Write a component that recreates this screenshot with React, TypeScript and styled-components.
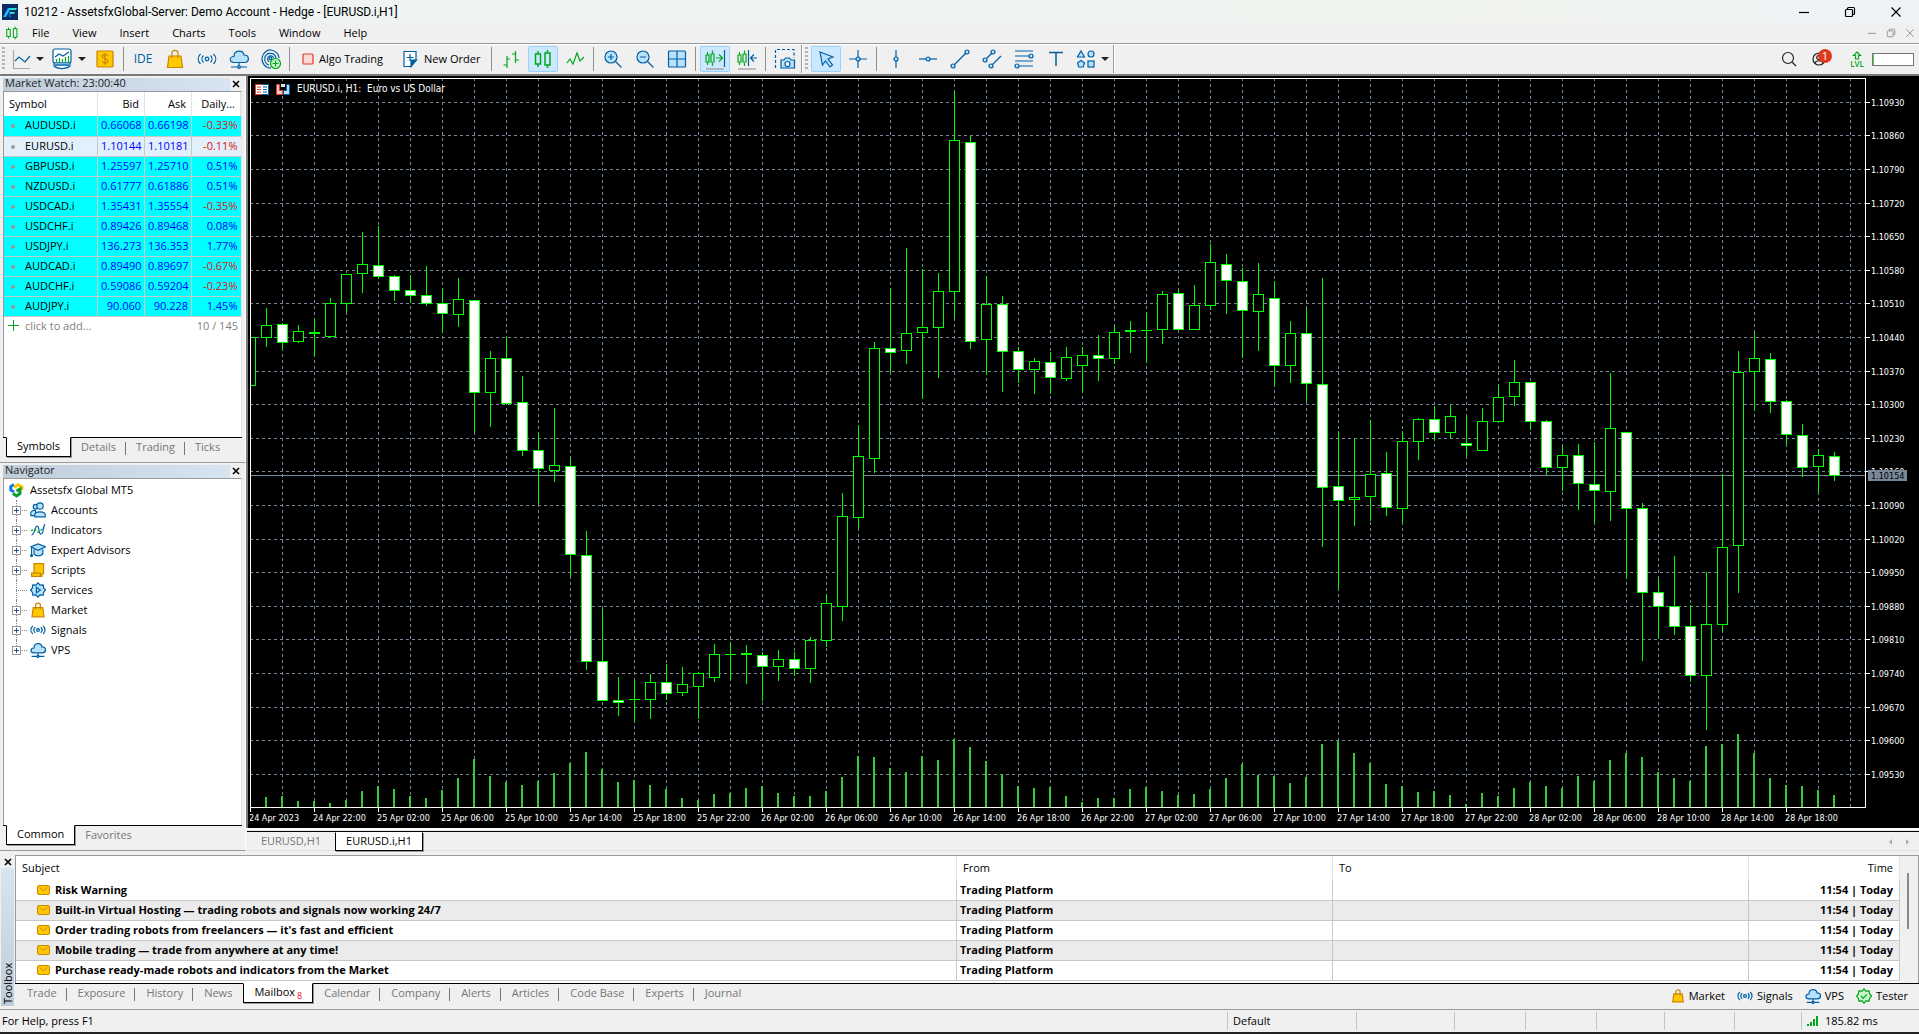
import React from "react";
import styled, { createGlobalStyle, css } from "styled-components";

const UI_FONT = `"Open Sans", "Noto Sans", "Liberation Sans", sans-serif`;
const TITLE_FONT = `Roboto, "Open Sans", "Liberation Sans", sans-serif`;
const AXIS_FONT = `"DejaVu Sans Condensed", "Open Sans", "Noto Sans", sans-serif`;
const BLUE = "#005fa3";
const SKY = "#b9e1fc";
const GREEN = "#00a81c";
const GOLD = "#ffc800";
const GOLD_DARK = "#c98600";

const GlobalStyle = createGlobalStyle`
  *, *::before, *::after { box-sizing: border-box; }
  html, body, #root { height: 100%; }
  body {
    margin: 0;
    background: #f0f0f0;
    color: #000;
    font-family: ${UI_FONT};
    font-size: 11px;
    line-height: 16px;
    overflow: hidden;
  }
  button {
    margin: 0;
    padding: 0;
    border: 0;
    background: none;
    color: inherit;
    font: inherit;
    white-space: nowrap;
  }
  svg { display: block; flex: none; }
`;

/* ---------- icons ---------- */

type IconProps = { size?: number; children: React.ReactNode; box?: number };
const Icon = ({ size = 20, box = 20, children }: IconProps) => (
  <svg
    width={size}
    height={size}
    viewBox={`0 0 ${box} ${box}`}
    fill="none"
    stroke={BLUE}
    strokeWidth={(1.2 * box) / size}
    aria-hidden="true"
  >
    {children}
  </svg>
);

const AppLogo = () => (
  <svg width="16" height="16" viewBox="0 0 16 16" aria-hidden="true">
    <rect width="16" height="16" fill="#0b2d63" />
    <path d="M1 13 6 4h3L4 13z" fill="#1fb6ff" />
    <path d="M8 4h7l-1 2H8zM8 8h5l-1 2H8z" fill="#2de0c8" />
    <path d="M7 6l2 7H7z" fill="#1273d8" />
  </svg>
);
const CandlesIcon = ({ size = 20 }: { size?: number }) => (
  <svg width={size} height={size} viewBox="0 0 20 20" fill="none" stroke={GREEN} strokeWidth="1.5" aria-hidden="true">
    <path d="M5 2v3M5 15v3M14.500 1v3M14.500 16v3M2.500 5h5v10h-5zM12 4h5v12h-5z" />
  </svg>
);
const LineChartIcon = () => (
  <Icon>
    <path d="M2.500 1v18.500H19" stroke="#a8a8a8" />
    <path d="M4 12l4-4 6 5 5-6" />
  </Icon>
);
const ChartGlobeIcon = () => (
  <Icon size={22} box={22}>
    <rect x="2" y="1" width="18" height="14" rx="2" fill="#fff" />
    <path d="M3 18c4 3.500 12 3.500 16 0v-3H3z" fill="#fff" />
    <path d="M4 17h14" stroke="#3c87c6" strokeWidth="2" />
    <path d="M4 9l4-3 4 2 6-4" />
    <path d="M5.500 14v-3M8.500 14v-4M11.500 14v-3M14.500 14v-5M17.500 14V8" stroke={GREEN} />
  </Icon>
);
const DollarIcon = () => (
  <Icon>
    <rect x="2" y="2" width="16" height="16" rx="1" fill={GOLD} stroke={GOLD_DARK} />
    <path d="M10 4v12M13 7c-1-2-6-2-6 .5s6 2 6 4.500-5 2.500-6 .5" stroke={GOLD_DARK} />
  </Icon>
);
const BagIcon = ({ size = 20 }: { size?: number }) => (
  <Icon size={size}>
    <path d="M4 7h12l1.500 11.500h-15z" fill={GOLD} stroke={GOLD_DARK} />
    <path d="M7 9V4c0-3.500 6-3.500 6 0v5" stroke={GOLD_DARK} />
  </Icon>
);
const SignalIcon = ({ size = 20 }: { size?: number }) => (
  <Icon size={size}>
    <circle cx="10" cy="10" r="1.800" fill={SKY} />
    <path d="M6.500 6.500c-2 2-2 5 0 7M13.500 6.500c2 2 2 5 0 7M3.500 5c-3 3-3 7 0 10M16.500 5c3 3 3 7 0 10" />
  </Icon>
);
const CloudIcon = ({ size = 20 }: { size?: number }) => (
  <Icon size={size}>
    <path d="M5 13.500c-5 0-5-6 0-6 0-7 9-7 10-1.500 6 0 5.500 7.500.5 7.500z" fill={SKY} />
    <path d="M10 14v3M2 18h16" />
    <circle cx="10" cy="18" r="1.300" fill={SKY} />
  </Icon>
);
const TargetIcon = () => (
  <Icon size={22} box={22}>
    <path d="M11 20C5 20 1.500 15 2 10S7 1.500 11 2s8 4 8 8M9 17c-3-1-5-4-4-8s9-6 11 1M9 14c-4-4 1-9 5-4" />
    <circle cx="10.500" cy="10.500" r="1.300" fill={SKY} />
    <circle cx="15.500" cy="15.500" r="5" fill="#c8f4c8" stroke={GREEN} />
    <path d="M15.500 12.500v6M12.500 15.500h6" stroke={GREEN} />
  </Icon>
);
const AlgoIcon = () => (
  <Icon size={12} box={12}>
    <rect x="1" y="1" width="10" height="10" rx="1" fill="#ffd9d3" stroke="#e03c31" />
  </Icon>
);
const NewOrderIcon = () => (
  <Icon size={18} box={18}>
    <path d="M3 1.500h12v8l-5 7H3z" fill="#fff" />
    <path d="M15.500 10H10v6.500z" fill={BLUE} />
    <path d="M9 4v7M5.500 7.500h7" />
  </Icon>
);
const BarsIcon = () => (
  <Icon>
    <path d="M6 7v12M2.500 16H6M6 10h3M14.500 2v12M11 5h3.500M14.500 11H18" stroke={GREEN} />
  </Icon>
);
const ZigzagIcon = () => (
  <Icon>
    <path d="M2 14l3-4 3 5 4-11 3 8 4-4" stroke={GREEN} />
  </Icon>
);
const ZoomIcon = ({ plus }: { plus?: boolean }) => (
  <Icon>
    <circle cx="8" cy="8" r="6" fill={SKY} />
    <path d="M12.500 12.500l6 6M5 8h6" />
    {plus && <path d="M8 5v6" />}
  </Icon>
);
const TileIcon = () => (
  <Icon>
    <rect x="1.500" y="2" width="17" height="16" rx="1" fill={SKY} />
    <path d="M10 2v16M2 10h16" />
  </Icon>
);
const ShiftIcon = ({ left }: { left?: boolean }) => (
  <Icon size={22} box={22}>
    <path d="M3.500 4v3M3.500 14v3M8.500 2.500v3M8.500 15v3M2 7h3v7H2zM7 6h3v8H7z" stroke={GREEN} />
    {left ? (
      <path d="M12.500 2v16M21 10h-6M18 6.500L14.500 10l3.500 3.500" />
    ) : (
      <>
        <path d="M20.500 2v17" />
        <path d="M12 10h6M15 6.500l3.500 3.500-3.500 3.500" stroke={GREEN} />
      </>
    )}
    <path d="M2 21h18" stroke="#999" />
  </Icon>
);
const CameraIcon = () => (
  <Icon size={22} box={22}>
    <path d="M1.500 20V1.500H20V10" strokeDasharray="3 2" />
    <path d="M7 12h3l1.500-2h4L17 12h3.500v8H7z" fill={SKY} />
    <circle cx="13.500" cy="16" r="2.500" fill="#fff" />
  </Icon>
);
const CursorIcon = () => (
  <Icon>
    <path d="M4 3l13 5-5 2 4.500 6-2.500 2-4.500-6L6.500 16z" fill={SKY} />
  </Icon>
);
const CrossIcon = () => (
  <Icon>
    <path d="M10 1v18M1 10h18" />
    <circle cx="10" cy="10" r="2" fill={SKY} />
  </Icon>
);
const VLineIcon = () => (
  <Icon>
    <path d="M10 1v18" />
    <circle cx="10" cy="10" r="2" fill={SKY} />
  </Icon>
);
const HLineIcon = () => (
  <Icon>
    <path d="M1 10h18" />
    <circle cx="10" cy="10" r="2" fill={SKY} />
  </Icon>
);
const TrendIcon = () => (
  <Icon>
    <path d="M3 17L17 3" />
    <circle cx="3" cy="17" r="2" fill={SKY} />
    <circle cx="17" cy="3" r="2" fill={SKY} />
  </Icon>
);
const ChannelIcon = () => (
  <Icon>
    <path d="M3 11l8-8M9 17L19 7" />
    <circle cx="3" cy="11" r="2" fill={SKY} />
    <circle cx="11" cy="3" r="2" fill={SKY} />
    <circle cx="9" cy="17" r="2" fill={SKY} />
  </Icon>
);
const FiboIcon = () => (
  <Icon>
    <path d="M1 2h18M1 7h15M1 12h18M3 17h16" />
    <circle cx="17" cy="7" r="2" fill={SKY} />
    <circle cx="3" cy="17" r="2" fill={SKY} />
  </Icon>
);
const TextIcon = () => (
  <Icon>
    <path d="M3 3.500h14M10 3.500V17" strokeWidth="1.500" />
  </Icon>
);
const ShapesIcon = () => (
  <Icon>
    <path d="M5 2l3.500 6h-7zM5 11.500l3.500 2.500-1.300 4H2.800L1.500 14z" fill={SKY} />
    <circle cx="15" cy="5" r="3" fill={SKY} />
    <rect x="12" y="12" width="6" height="6" fill={SKY} />
  </Icon>
);
const CaretIcon = () => (
  <svg width="8" height="4" viewBox="0 0 8 4" aria-hidden="true">
    <path d="M0 0h8L4 4z" fill="#222" />
  </svg>
);
const SearchIcon = () => (
  <svg width="16" height="16" viewBox="0 0 16 16" fill="none" stroke="#222" strokeWidth="1.200" aria-hidden="true">
    <circle cx="7" cy="7" r="5.500" />
    <path d="M11 11l4 4" />
  </svg>
);
const UserIcon = () => (
  <svg width="14" height="14" viewBox="0 0 14 14" fill="none" stroke="#222" strokeWidth="1.200" aria-hidden="true">
    <circle cx="7" cy="7" r="6" />
    <circle cx="7" cy="5.500" r="2.300" />
    <path d="M3 11c1-3 7-3 8 0" />
  </svg>
);
const UpArrowIcon = () => (
  <svg width="10" height="9" viewBox="0 0 10 9" fill="none" stroke={GREEN} strokeWidth="1.200" aria-hidden="true">
    <path d="M5 1l3.500 3.500H6.500V8h-3V4.500h-2z" />
  </svg>
);
const MinimizeIcon = ({ size = 12 }: { size?: number }) => (
  <svg width={size} height={size} viewBox="0 0 12 12" stroke="currentColor" strokeWidth="1.200" aria-hidden="true">
    <path d="M1 6.500h10" />
  </svg>
);
const RestoreIcon = ({ size = 12 }: { size?: number }) => (
  <svg width={size} height={size} viewBox="0 0 12 12" fill="none" stroke="currentColor" strokeWidth="1.200" aria-hidden="true">
    <rect x="1.500" y="3.500" width="7" height="7" rx="1" />
    <path d="M3.500 3.500V2.500c0-.6.400-1 1-1h5c.6 0 1 .4 1 1v5c0 .6-.4 1-1 1h-1" />
  </svg>
);
const CloseIcon = ({ size = 12, weight = 1.2 }: { size?: number; weight?: number }) => (
  <svg width={size} height={size} viewBox="0 0 12 12" stroke="currentColor" strokeWidth={weight} aria-hidden="true">
    <path d="M1.500 1.500l9 9M10.500 1.500l-9 9" />
  </svg>
);
const PlusIcon = () => (
  <svg width="11" height="11" viewBox="0 0 11 11" stroke={GREEN} aria-hidden="true">
    <path d="M5.500 0v11M0 5.500h11" />
  </svg>
);
const PlatformIcon = () => (
  <svg width="15" height="15" viewBox="0 0 15 15" fill="none" strokeWidth="3" aria-hidden="true">
    <path d="M5 1.500L1.800 3.500V7L5 9" stroke="#0a7de0" />
    <path d="M5 4.500L9 1.800l4 2.200v3" stroke="#ffc400" />
    <path d="M4 10.500l3.500 2.500 3.500-2.500V6L7.500 8" stroke="#0a9e2a" />
  </svg>
);
const AccountsIcon = () => (
  <Icon size={16}>
    <circle cx="7" cy="6" r="3" fill={SKY} />
    <path d="M1 17v-3c0-3 4-4 6-3v6z" fill={SKY} />
    <circle cx="12.500" cy="5" r="4" fill={SKY} />
    <path d="M6 18.500V16c0-5 13-5 13 0v2.500z" fill={SKY} />
  </Icon>
);
const IndicatorsIcon = () => (
  <Icon size={16}>
    <path d="M2 16c4 0 4-11 7-11s1 10 5 10 1-10 5-12" />
    <path d="M1 11l5-2 4 4 8-6" stroke={GREEN} strokeDasharray="3 2" />
  </Icon>
);
const HatIcon = () => (
  <Icon size={16}>
    <path d="M5 9v6c3 3 8 3 11 0V9" fill={SKY} />
    <path d="M1 6l9-3.500L19.500 6 10 10.500z" fill={SKY} />
    <path d="M2 7v9" />
    <circle cx="2" cy="17" r="1.200" fill={BLUE} />
  </Icon>
);
const ScriptIcon = () => (
  <Icon size={16}>
    <path d="M5 2h12v13h-2v3H2v-4h3z" fill={GOLD} stroke={GOLD_DARK} />
    <path d="M5 14h8v4" stroke={GOLD_DARK} />
  </Icon>
);
const GearIcon = ({ green }: { green?: boolean }) => (
  <svg
    width="16"
    height="16"
    viewBox="0 0 20 20"
    fill={green ? "#c8f4c8" : SKY}
    stroke={green ? GREEN : BLUE}
    strokeWidth="1.500"
    aria-hidden="true"
  >
    <path d="M10 1l2.500 3 4-.5.5 4 2.500 2.500-2.500 3-.5 3.500-4-.5L10 19l-2.500-3-4 .5-.5-3.500L.8 10l2.200-2.500.5-4 4 .5z" />
    {green ? <path d="M6.500 10l2.500 3 4.500-5" fill="none" /> : <path d="M8 6.500l5 3.500-5 3.500z" />}
  </svg>
);
const MailIcon = () => (
  <svg width="13" height="10" viewBox="0 0 13 10" fill={GOLD} stroke={GOLD_DARK} aria-hidden="true">
    <rect x=".5" y=".5" width="12" height="9" rx="1.500" />
    <path d="M2.500 2.500l4 3 4-3" fill="none" />
  </svg>
);
const DepthIcon = () => (
  <svg width="14" height="11" viewBox="0 0 14 11" aria-hidden="true">
    <rect x=".5" y=".5" width="13" height="10" fill="#fff" stroke="#e03c31" />
    <path d="M7 .5h6.500v10H7" fill="#fff" stroke={BLUE} />
    <path d="M2 3h4M2 5.500h4M2 8h4" stroke="#e03c31" />
    <path d="M8 3h4M8 5.500h4M8 8h4" stroke={BLUE} />
  </svg>
);
const OneClickIcon = () => (
  <svg width="14" height="11" viewBox="0 0 14 11" aria-hidden="true">
    <path d="M.5.500h3v6h3v4h-6z" fill="#ffc9c4" stroke="#e03c31" />
    <path d="M13.500.500h-3v6h-3v4h6z" fill="#b9e1fc" stroke={BLUE} />
    <path d="M5 0h4v3H5z" fill="#ddd" />
  </svg>
);
const ConnectionIcon = () => (
  <svg width="12" height="10" viewBox="0 0 12 10" fill={GREEN} aria-hidden="true">
    <path d="M0 8h2v2H0zM3 6h2v4H3zM6 3h2v7H6zM9 0h2v10H9z" />
  </svg>
);

/* ---------- window frame ---------- */

const Shell = styled.div`
  display: flex;
  flex-direction: column;
  height: 100vh;
  border-bottom: 2px solid #222;
`;
const TitleBar = styled.header`
  display: flex;
  align-items: center;
  height: 23px;
  padding-left: 2px;
  gap: 6px;
  background: linear-gradient(90deg, #f1f4f4, #eef4f2 50%, #f1f4ee 78%, #eff3f8);
  font-family: ${TITLE_FONT};
  font-size: 12px;
`;
const Spacer = styled.div`
  flex: 1;
`;
const WindowControls = styled.div<{ $small?: boolean }>`
  display: flex;
  color: ${(p) => (p.$small ? "#999" : "#000")};
  & > button {
    display: grid;
    place-items: center;
    width: ${(p) => (p.$small ? 19 : 46)}px;
    height: 20px;
  }
`;
const MenuBar = styled.nav`
  display: flex;
  align-items: center;
  gap: 1px;
  height: 22px;
  padding: 0 0 2px 5px;
  border-bottom: 1px solid #fff;
  box-shadow: inset 0 -1px #9a9a9a;
`;
const MenuItem = styled.button`
  height: 20px;
  padding: 0 11px;
`;
const MenuSymbol = styled.span`
  margin-right: 1px;
`;

/* ---------- toolbar ---------- */

const Toolbar = styled.div`
  display: flex;
  align-items: center;
  height: 31px;
  padding-bottom: 1px;
  border-bottom: 2px solid #7a7a7a;
`;
const Grip = styled.div`
  width: 3px;
  height: 24px;
  margin: 0 2px;
  background: repeating-linear-gradient(#b4b4b4 0 2px, transparent 2px 4px);
`;
const Divider = styled.div`
  width: 1px;
  height: 24px;
  margin: 0 3px 0 2px;
  background: #909090;
`;
const BarEnd = styled.div`
  width: 2px;
  height: 28px;
  border-left: 1px solid #9a9a9a;
  border-right: 1px solid #fff;
`;
const ToolButton = styled.button<{ $active?: boolean; $wide?: boolean }>`
  display: flex;
  align-items: center;
  justify-content: center;
  gap: 5px;
  min-width: 30px;
  height: 26px;
  margin: 0 1px;
  padding: 0 ${(p) => (p.$wide ? 7 : 0)}px;
  border: 1px solid transparent;
  border-radius: 2px;
  ${(p) =>
    p.$active &&
    css`
      border-color: #99d1ff;
      background: #cce8ff;
    `}
`;
const IdeLabel = styled.span`
  color: ${BLUE};
  font-size: 12px;
`;
const DropButton = styled(ToolButton)`
  width: 39px;
`;
const AccountButton = styled(ToolButton)`
  position: relative;
  min-width: 28px;
  margin: 0;
`;
const Badge = styled.span`
  position: absolute;
  top: 2px;
  right: 0;
  width: 14px;
  height: 14px;
  border-radius: 7px;
  background: #e03a1e;
  color: #fff;
  line-height: 14px;
`;
const LevelLabel = styled.div`
  display: grid;
  justify-items: center;
  width: 24px;
  margin-left: 12px;
  color: ${GREEN};
  font-size: 8px;
  font-weight: 600;
  line-height: 8px;
`;
const LevelBox = styled.div`
  width: 42px;
  height: 13px;
  margin: 0 5px 0 3px;
  border: 1px solid #777;
  background: linear-gradient(90deg, #4fd04f 1px, #fff 1px);
`;

/* ---------- docked panels ---------- */

const Workspace = styled.div`
  display: flex;
  flex: 1;
  min-height: 0;
`;
const LeftDock = styled.aside`
  display: flex;
  flex-direction: column;
  width: 246px;
  padding-bottom: 2px;
`;
const Panel = styled.section<{ $height?: number }>`
  display: flex;
  flex-direction: column;
  flex: ${(p) => (p.$height ? "none" : 1)};
  height: ${(p) => (p.$height ? `${p.$height}px` : "auto")};
  min-height: 0;
  padding: 1px 3px 4px;
  border-bottom: 1px solid #9a9a9a;
  border-right: 1px solid #fff;
`;
const PanelTitle = styled.header`
  display: flex;
  justify-content: space-between;
  align-items: center;
  height: 14px;
`;
const PanelName = styled.h2`
  flex: 1;
  height: 13px;
  margin: 0;
  padding-left: 2px;
  background: linear-gradient(90deg, #bfcddb, #d7e4f2);
  color: #222;
  font: inherit;
  line-height: 10px;
`;
const PanelClose = styled.button`
  display: grid;
  place-items: center;
  width: 12px;
  height: 13px;
`;
const PanelBody = styled.div`
  flex: 1;
  min-height: 0;
  border: 1px solid #9a9a9a;
  border-bottom: 0;
  border-right-color: #e3e3e3;
  background: #fff;
`;
const TabStrip = styled.div`
  display: flex;
  height: 21px;
  padding-left: 3px;
  border-top: 1px solid #000;
`;
const Tab = styled.button<{ $active?: boolean; $divided?: boolean }>`
  position: relative;
  height: 20px;
  padding: 0 10px 2px;
  color: #777;
  ${(p) =>
    p.$divided &&
    css`
      &::after {
        content: "";
        position: absolute;
        top: 4px;
        right: 0;
        width: 1px;
        height: 13px;
        background: #777;
      }
    `}
  ${(p) =>
    p.$active &&
    css`
      margin-top: -1px;
      border: 1px solid #000;
      border-top-color: #fff;
      background: #fff;
      color: #000;
      box-shadow: 1px 1px #999;
    `}
`;

const QuoteTable = styled.table`
  width: 100%;
  border-collapse: collapse;
  table-layout: fixed;
`;
const QuoteHead = styled.th<{ $left?: boolean }>`
  height: 24px;
  padding: 0 5px;
  border-right: 1px solid #e3e3e3;
  font-weight: 400;
  text-align: ${(p) => (p.$left ? "left" : "right")};
  white-space: nowrap;
`;
const QuoteRow = styled.tr<{ $selected?: boolean }>`
  height: 20px;
  background: ${(p) => (p.$selected ? "#e2f0fc" : "#00ffff")};
`;
const QuoteCell = styled.td<{ $tone?: "up" | "down" }>`
  padding: 0 3px 1px;
  border-right: 1px solid #c8c8c8;
  border-bottom: 1px solid #c8c8c8;
  color: ${(p) => (p.$tone === "down" ? "#e01010" : "#0000ff")};
  text-align: right;
  &:last-child {
    border-right: 0;
  }
`;
const SymbolCell = styled.td`
  padding: 0 0 1px 7px;
  border-right: 1px solid #c8c8c8;
  border-bottom: 1px solid #c8c8c8;
  &::before {
    content: "";
    display: inline-block;
    width: 4px;
    height: 4px;
    margin-right: 10px;
    border-radius: 2px;
    background: #999;
    vertical-align: middle;
  }
`;
const AddRow = styled.div`
  display: flex;
  align-items: center;
  justify-content: space-between;
  height: 20px;
  padding: 0 3px 2px 4px;
  color: #808080;
`;
const AddButton = styled.button`
  display: flex;
  align-items: center;
  gap: 6px;
`;

const Tree = styled.ul`
  margin: 0;
  padding: 1px 0 0 5px;
  list-style: none;
`;
const TreeRoot = styled.div`
  display: flex;
  align-items: center;
  gap: 6px;
  height: 20px;
`;
const TreeItem = styled.li`
  display: flex;
  align-items: center;
  height: 20px;
  padding-left: 3px;
`;
const Expander = styled.button<{ $leaf?: boolean; $last?: boolean }>`
  position: relative;
  width: 18px;
  height: 20px;
  &::before {
    content: "";
    position: absolute;
    top: 0;
    left: 4px;
    width: 10px;
    height: ${(p) => (p.$last ? 10 : 20)}px;
    border-left: 1px dotted #888;
  }
  & > i {
    position: absolute;
    top: 10px;
    left: 4px;
    width: 11px;
    border-top: 1px dotted #888;
  }
  & > svg {
    position: relative;
    display: ${(p) => (p.$leaf ? "none" : "block")};
  }
`;
const TreeLabel = styled.button`
  display: flex;
  align-items: center;
  gap: 5px;
`;

/* ---------- chart ---------- */

const ChartColumn = styled.main`
  display: flex;
  flex-direction: column;
  flex: 1;
  min-width: 0;
`;
const ChartFrame = styled.section`
  position: relative;
  display: grid;
  grid-template: minmax(0, 1fr) 20px / minmax(0, 1fr) 52px;
  flex: 1;
  min-height: 0;
  padding: 2px 1px 0 2px;
  border-left: 2px solid #7a7a7a;
  background: #000;
`;
const PlotArea = styled.div`
  min-width: 0;
  border: 1px solid #fff;
  overflow: hidden;
`;
const AxisArea = styled.div<{ $wide?: boolean }>`
  min-width: 0;
  overflow: hidden;
  ${(p) => p.$wide && "grid-column: 1 / 3;"}
`;
const FullSvg = styled.svg`
  width: 100%;
  height: 100%;
  overflow: hidden;
  font-family: ${AXIS_FONT};
  font-size: 9px;
  shape-rendering: crispEdges;
`;
const ChartCaption = styled.div`
  position: absolute;
  top: 5px;
  left: 7px;
  display: flex;
  align-items: center;
  gap: 7px;
  color: #fff;
  font-family: ${AXIS_FONT};
  font-size: 10px;
  white-space: pre;
`;
const ChartTabs = styled.div`
  display: flex;
  height: 25px;
  padding-left: 1px;
  border-top: 2px solid #fff;
`;
const ChartTabRow = styled.div`
  display: flex;
  align-items: center;
  flex: 1;
  height: 20px;
  margin-top: 1px;
  border-top: 1px solid #000;
  border-bottom: 1px solid #e0e0e0;
`;
const ChartTab = styled.button<{ $active?: boolean }>`
  width: 88px;
  height: 19px;
  color: #777;
  ${(p) =>
    p.$active &&
    css`
      border: 1px solid #000;
      border-top-color: #fff;
      background: #fff;
      color: #000;
      box-shadow: 1px 1px #999;
    `}
`;
const ScrollArrow = styled.button<{ $right?: boolean }>`
  width: 20px;
  height: 16px;
  &::before {
    content: "";
    display: inline-block;
    border: 3px solid transparent;
    border-${(p) => (p.$right ? "left" : "right")}-color: #aaa;
  }
`;

/* Each bar: [filled, high, body top, body bottom, low, volume], in pixels from the plot's top. */
type Bar = [number, number, number, number, number, number];
const BARS: Bar[] = [
  [0, 258, 258, 306, 306, 0], [0, 229, 246, 258, 268, 11], [1, 244, 245, 263, 270, 12], [0, 246, 252, 262, 264, 7],
  [0, 239, 253, 254, 277, 7], [0, 219, 224, 257, 258, 5], [0, 195, 195, 224, 233, 8], [0, 153, 185, 194, 214, 17],
  [1, 147, 186, 197, 200, 22], [1, 196, 197, 211, 222, 19], [1, 196, 211, 216, 224, 12], [1, 187, 216, 224, 227, 10],
  [1, 209, 224, 234, 254, 18], [0, 199, 220, 235, 248, 30], [1, 221, 221, 313, 353, 49], [0, 272, 279, 313, 348, 32],
  [1, 258, 279, 324, 326, 26], [1, 297, 323, 371, 377, 23], [1, 354, 371, 389, 425, 27], [0, 329, 386, 391, 403, 35],
  [1, 379, 387, 475, 498, 45], [1, 452, 476, 582, 591, 56], [1, 530, 582, 621, 622, 39], [1, 598, 621, 623, 637, 26],
  [0, 601, 620, 620, 643, 28], [0, 595, 603, 620, 640, 23], [1, 585, 603, 614, 621, 19], [0, 588, 605, 613, 617, 10],
  [0, 593, 594, 607, 640, 8], [0, 565, 575, 598, 603, 14], [0, 564, 575, 575, 601, 15], [0, 566, 574, 575, 605, 20],
  [1, 573, 576, 587, 622, 22], [0, 571, 580, 587, 602, 15], [1, 573, 580, 589, 597, 12], [0, 558, 561, 589, 604, 12],
  [0, 515, 524, 561, 568, 17], [0, 414, 437, 527, 542, 31], [0, 346, 377, 438, 450, 52], [0, 263, 269, 379, 394, 51],
  [1, 209, 269, 273, 293, 40], [0, 169, 254, 271, 285, 36], [0, 190, 248, 253, 320, 52], [0, 194, 212, 248, 299, 48],
  [0, 13, 61, 212, 239, 69], [1, 57, 63, 262, 270, 61], [0, 197, 225, 260, 296, 47], [1, 217, 225, 272, 313, 34],
  [1, 268, 272, 290, 304, 22], [0, 279, 282, 290, 315, 20], [1, 273, 283, 298, 315, 21], [0, 268, 278, 299, 302, 12],
  [0, 268, 276, 286, 314, 6], [1, 256, 276, 279, 302, 10], [0, 247, 253, 279, 285, 10], [0, 242, 251, 252, 274, 19],
  [0, 233, 251, 251, 284, 21], [0, 212, 215, 250, 265, 17], [1, 211, 214, 250, 250, 13], [0, 206, 226, 250, 250, 14],
  [0, 165, 183, 226, 231, 19], [1, 175, 185, 201, 235, 30], [1, 189, 202, 231, 279, 44], [0, 184, 215, 232, 272, 33],
  [1, 202, 219, 286, 307, 32], [0, 242, 254, 286, 304, 25], [1, 230, 254, 304, 323, 31], [1, 199, 305, 408, 468, 64],
  [1, 352, 407, 421, 509, 67], [0, 359, 418, 420, 447, 55], [0, 341, 395, 417, 442, 45], [1, 373, 394, 428, 437, 24],
  [0, 352, 362, 429, 444, 22], [0, 339, 340, 362, 381, 16], [1, 327, 340, 353, 362, 17], [0, 326, 337, 353, 359, 13],
  [1, 337, 364, 366, 377, 4], [0, 329, 342, 371, 371, 15], [0, 306, 318, 342, 343, 12], [0, 281, 303, 317, 327, 20],
  [1, 303, 303, 342, 351, 26], [1, 341, 342, 388, 396, 22], [0, 367, 376, 388, 412, 20], [1, 365, 376, 404, 431, 32],
  [1, 363, 405, 411, 444, 27], [0, 294, 349, 412, 442, 48], [1, 353, 353, 429, 500, 55], [1, 424, 429, 513, 582, 51],
  [1, 500, 513, 527, 559, 36], [1, 477, 527, 547, 556, 30], [1, 526, 547, 596, 603, 27], [0, 493, 545, 596, 651, 62],
  [0, 395, 468, 545, 553, 64], [0, 272, 293, 466, 514, 74], [0, 254, 279, 292, 332, 55], [1, 274, 280, 322, 334, 30],
  [1, 321, 322, 355, 365, 23], [1, 345, 356, 388, 398, 22], [0, 370, 376, 387, 413, 18], [1, 373, 377, 396, 402, 13],
];
const BAR_STEP = 16;
const PLOT_HEIGHT = 729;
const PRICE_LINE = 396;
const barX = (i: number) => i * BAR_STEP - 1;
const PRICES = Array.from({ length: 21 }, (_, k) => ({
  y: Math.round(23 + k * 33.6 - 0.2),
  label: (1.1093 - k * 0.0007).toFixed(5),
}));
const TIMES = [
  "24 Apr 2023", "24 Apr 22:00", "25 Apr 02:00", "25 Apr 06:00", "25 Apr 10:00", "25 Apr 14:00", "25 Apr 18:00",
  "25 Apr 22:00", "26 Apr 02:00", "26 Apr 06:00", "26 Apr 10:00", "26 Apr 14:00", "26 Apr 18:00", "26 Apr 22:00",
  "27 Apr 02:00", "27 Apr 06:00", "27 Apr 10:00", "27 Apr 14:00", "27 Apr 18:00", "27 Apr 22:00", "28 Apr 02:00",
  "28 Apr 06:00", "28 Apr 10:00", "28 Apr 14:00", "28 Apr 18:00",
];

const Plot = () => (
  <FullSvg role="img" aria-label="EURUSD.i hourly candlestick chart">
    <g stroke="#778899" strokeDasharray="3 3">
      {PRICES.map((p) => (
        <line key={p.label} x1="-1" x2="100%" y1={p.y + 0.5} y2={p.y + 0.5} />
      ))}
      {Array.from({ length: 50 }, (_, k) => (
        <line key={k} x1={k * 32 + 31.5} x2={k * 32 + 31.5} y1="-1" y2={PLOT_HEIGHT} />
      ))}
    </g>
    <g fill="#32cd32">
      {BARS.map((b, i) => (
        <rect key={i} x={barX(i) - 1} y={PLOT_HEIGHT - b[5]} width="2" height={b[5]} />
      ))}
    </g>
    <rect x="0" y={PRICE_LINE} width="100%" height="1" fill="#778899" />
    {BARS.map(([filled, high, top, bottom, low], i) => (
      <g key={i}>
        <rect x={barX(i)} y={high} width="1" height={low - high} fill="#0f0" />
        <rect x={barX(i) - 5} y={top} width="11" height={bottom - top + 1} fill="#0f0" />
        {bottom - top > 1 && (
          <rect x={barX(i) - 4} y={top + 1} width="9" height={bottom - top - 1} fill={filled ? "#fff" : "#000"} />
        )}
      </g>
    ))}
  </FullSvg>
);

const PriceAxis = () => (
  <FullSvg>
    {PRICES.map((p) => (
      <g key={p.label} fill="#fff">
        <rect x="0" y={p.y + 1} width="4" height="1" />
        <text x="5" y={p.y + 5}>{p.label}</text>
      </g>
    ))}
    <rect x="2" y={PRICE_LINE - 4} width="39" height="11" fill="#778899" />
    <text x="5" y={PRICE_LINE + 5} fill="#000">1.10154</text>
  </FullSvg>
);

const TimeAxis = () => (
  <FullSvg>
    {TIMES.map((t, k) => (
      <g key={t} fill="#fff">
        <rect x={k * 64} y="0" width="1" height="4" />
        <text x={k * 64 - 1} y="13">{t}</text>
      </g>
    ))}
  </FullSvg>
);

/* ---------- toolbox ---------- */

const Toolbox = styled.section`
  display: flex;
  height: 157px;
  padding-top: 2px;
  border-bottom: 1px solid #9a9a9a;
`;
const ToolboxRail = styled.div`
  display: flex;
  flex-direction: column;
  align-items: center;
  width: 15px;
  padding: 0 1px 3px;
`;
const ToolboxName = styled.h2`
  display: flex;
  align-items: center;
  flex: 1;
  width: 13px;
  margin: 0;
  padding-top: 2px;
  background: linear-gradient(#bfcddb, #d7e4f2);
  font: inherit;
  line-height: 13px;
  writing-mode: vertical-rl;
  rotate: 180deg;
`;
const ToolboxMain = styled.div`
  display: flex;
  flex-direction: column;
  flex: 1;
  min-width: 0;
`;
const MailView = styled.div`
  display: flex;
  height: 128px;
  border: 1px solid #9a9a9a;
  border-bottom: 0;
  background: #fff;
  overflow: hidden;
`;
const MailTable = styled.table`
  flex: 1;
  height: 124px;
  border-collapse: collapse;
  table-layout: fixed;
`;
const MailHead = styled.th<{ $right?: boolean }>`
  height: 24px;
  padding: 0 6px;
  border-right: 1px solid #e3e3e3;
  font-weight: 400;
  text-align: ${(p) => (p.$right ? "right" : "left")};
`;
const MailRow = styled.tr<{ $shaded?: boolean }>`
  height: 20px;
  background: ${(p) => (p.$shaded ? "#ebebeb" : "#fff")};
`;
const MailCell = styled.td<{ $right?: boolean }>`
  padding: 0 6px 0 3px;
  border-right: 1px solid #c8c8c8;
  border-bottom: 1px solid #c8c8c8;
  font-weight: 700;
  text-align: ${(p) => (p.$right ? "right" : "left")};
`;
const MailSubject = styled.div`
  display: flex;
  align-items: center;
  gap: 5px;
  padding-left: 18px;
`;
const ScrollTrack = styled.div`
  width: 18px;
  padding: 17px 7px 0;
  background: #f0f0f0;
  &::before {
    content: "";
    display: block;
    width: 2px;
    height: 56px;
    background: #8a8a8a;
  }
`;
const ToolboxFooter = styled.div`
  display: flex;
  gap: 1px;
  height: 21px;
  padding-left: 2px;
  border-top: 1px solid #000;
`;
const Count = styled.sub`
  margin-left: 2px;
  color: #e81123;
  font-size: 9px;
  line-height: 0;
  vertical-align: -3px;
`;
const ServiceLink = styled.button`
  display: flex;
  align-items: center;
  gap: 4px;
  height: 24px;
  margin-right: 11px;
`;
const StatusBar = styled.footer`
  display: flex;
  align-items: center;
  height: 22px;
  padding-left: 2px;
`;
const StatusCell = styled.div<{ $width: number }>`
  display: flex;
  align-items: center;
  gap: 6px;
  width: ${(p) => p.$width}px;
  height: 18px;
  padding-left: 5px;
  border-left: 1px solid #c4c4c4;
`;

/* ---------- data ---------- */

const MENUS = ["File", "View", "Insert", "Charts", "Tools", "Window", "Help"];
const QUOTES = [
  ["AUDUSD.i", "0.66068", "0.66198", "-0.33%"],
  ["EURUSD.i", "1.10144", "1.10181", "-0.11%"],
  ["GBPUSD.i", "1.25597", "1.25710", "0.51%"],
  ["NZDUSD.i", "0.61777", "0.61886", "0.51%"],
  ["USDCAD.i", "1.35431", "1.35554", "-0.35%"],
  ["USDCHF.i", "0.89426", "0.89468", "0.08%"],
  ["USDJPY.i", "136.273", "136.353", "1.77%"],
  ["AUDCAD.i", "0.89490", "0.89697", "-0.67%"],
  ["AUDCHF.i", "0.59086", "0.59204", "-0.23%"],
  ["AUDJPY.i", "90.060", "90.228", "1.45%"],
];
const NAV_ITEMS: { name: string; icon: React.ReactNode; leaf?: boolean }[] = [
  { name: "Accounts", icon: <AccountsIcon /> },
  { name: "Indicators", icon: <IndicatorsIcon /> },
  { name: "Expert Advisors", icon: <HatIcon /> },
  { name: "Scripts", icon: <ScriptIcon /> },
  { name: "Services", icon: <GearIcon />, leaf: true },
  { name: "Market", icon: <BagIcon size={16} /> },
  { name: "Signals", icon: <SignalIcon size={16} /> },
  { name: "VPS", icon: <CloudIcon size={16} /> },
];
const MAILS = [
  "Risk Warning",
  "Built-in Virtual Hosting — trading robots and signals now working 24/7",
  "Order trading robots from freelancers — it's fast and efficient",
  "Mobile trading — trade from anywhere at any time!",
  "Purchase ready-made robots and indicators from the Market",
];
const TOOL_TABS = [
  "Trade", "Exposure", "History", "News", "Mailbox", "Calendar", "Company", "Alerts", "Articles", "Code Base",
  "Experts", "Journal",
];

type ToolProps = { label: string; active?: boolean; children: React.ReactNode };
const Tool = ({ label, active, children }: ToolProps) => (
  <ToolButton aria-label={label} aria-pressed={active} $active={active}>
    {children}
  </ToolButton>
);

const MainToolbar = () => (
  <Toolbar role="toolbar" aria-label="Main toolbar">
    <Grip />
    <DropButton aria-label="New chart"><LineChartIcon /><CaretIcon /></DropButton>
    <DropButton aria-label="Profiles"><ChartGlobeIcon /><CaretIcon /></DropButton>
    <Tool label="Trade"><DollarIcon /></Tool>
    <Divider />
    <ToolButton><IdeLabel>IDE</IdeLabel></ToolButton>
    <Tool label="Market"><BagIcon /></Tool>
    <Tool label="Signals"><SignalIcon /></Tool>
    <Tool label="VPS"><CloudIcon /></Tool>
    <Tool label="Copy trading"><TargetIcon /></Tool>
    <Divider />
    <ToolButton $wide><AlgoIcon />Algo Trading</ToolButton>
    <ToolButton $wide><NewOrderIcon />New Order</ToolButton>
    <Divider />
    <Tool label="Bar chart"><BarsIcon /></Tool>
    <Tool label="Candlesticks" active><CandlesIcon /></Tool>
    <Tool label="Line chart"><ZigzagIcon /></Tool>
    <Divider />
    <Tool label="Zoom in"><ZoomIcon plus /></Tool>
    <Tool label="Zoom out"><ZoomIcon /></Tool>
    <Tool label="Tile windows"><TileIcon /></Tool>
    <Divider />
    <Tool label="Auto scroll" active><ShiftIcon /></Tool>
    <Tool label="Chart shift"><ShiftIcon left /></Tool>
    <Divider />
    <Tool label="Screenshot"><CameraIcon /></Tool>
    <BarEnd />
    <Grip />
    <Tool label="Cursor" active><CursorIcon /></Tool>
    <Tool label="Crosshair"><CrossIcon /></Tool>
    <Divider />
    <Tool label="Vertical line"><VLineIcon /></Tool>
    <Tool label="Horizontal line"><HLineIcon /></Tool>
    <Tool label="Trendline"><TrendIcon /></Tool>
    <Tool label="Channel"><ChannelIcon /></Tool>
    <Tool label="Fibonacci"><FiboIcon /></Tool>
    <Tool label="Text"><TextIcon /></Tool>
    <DropButton aria-label="Shapes"><ShapesIcon /><CaretIcon /></DropButton>
    <BarEnd />
    <Spacer />
    <Tool label="Search"><SearchIcon /></Tool>
    <AccountButton aria-label="Account"><UserIcon /><Badge>1</Badge></AccountButton>
    <LevelLabel><UpArrowIcon />LVL</LevelLabel>
    <LevelBox />
  </Toolbar>
);

const MarketWatch = () => (
  <Panel $height={387}>
    <PanelTitle>
      <PanelName>Market Watch: 23:00:40</PanelName>
      <PanelClose aria-label="Close Market Watch"><CloseIcon size={8} weight={2.4} /></PanelClose>
    </PanelTitle>
    <PanelBody>
      <QuoteTable>
        <colgroup>
          <col />
          <col width="47" />
          <col width="47" />
          <col width="49" />
        </colgroup>
        <thead>
          <tr>
            <QuoteHead $left>Symbol</QuoteHead>
            <QuoteHead>Bid</QuoteHead>
            <QuoteHead>Ask</QuoteHead>
            <QuoteHead>Daily...</QuoteHead>
          </tr>
        </thead>
        <tbody>
          {QUOTES.map(([symbol, bid, ask, daily]) => (
            <QuoteRow key={symbol} $selected={symbol === "EURUSD.i"}>
              <SymbolCell>{symbol}</SymbolCell>
              <QuoteCell>{bid}</QuoteCell>
              <QuoteCell>{ask}</QuoteCell>
              <QuoteCell $tone={daily.startsWith("-") ? "down" : "up"}>{daily}</QuoteCell>
            </QuoteRow>
          ))}
        </tbody>
      </QuoteTable>
      <AddRow>
        <AddButton><PlusIcon />click to add...</AddButton>
        <span>10 / 145</span>
      </AddRow>
    </PanelBody>
    <TabStrip>
      <Tab $active>Symbols</Tab>
      <Tab $divided>Details</Tab>
      <Tab $divided>Trading</Tab>
      <Tab>Ticks</Tab>
    </TabStrip>
  </Panel>
);

const Navigator = () => (
  <Panel>
    <PanelTitle>
      <PanelName>Navigator</PanelName>
      <PanelClose aria-label="Close Navigator"><CloseIcon size={8} weight={2.4} /></PanelClose>
    </PanelTitle>
    <PanelBody>
      <Tree>
        <li>
          <TreeRoot><PlatformIcon />Assetsfx Global MT5</TreeRoot>
        </li>
        {NAV_ITEMS.map((item, i) => (
          <TreeItem key={item.name}>
            <Expander aria-label={`Expand ${item.name}`} $leaf={item.leaf} $last={i === NAV_ITEMS.length - 1}>
              <i />
              <svg width="9" height="9" viewBox="0 0 9 9" aria-hidden="true">
                <rect x=".5" y=".5" width="8" height="8" fill="#fff" stroke="#999" />
                <path d="M4.500 2v5M2 4.500h5" stroke="#2b4c9b" />
              </svg>
            </Expander>
            <TreeLabel>{item.icon}{item.name}</TreeLabel>
          </TreeItem>
        ))}
      </Tree>
    </PanelBody>
    <TabStrip>
      <Tab $active>Common</Tab>
      <Tab>Favorites</Tab>
    </TabStrip>
  </Panel>
);

const ChartWindow = () => (
  <ChartColumn>
    <ChartFrame>
      <PlotArea><Plot /></PlotArea>
      <AxisArea><PriceAxis /></AxisArea>
      <AxisArea $wide><TimeAxis /></AxisArea>
      <ChartCaption>
        <DepthIcon />
        <OneClickIcon />
        <span>EURUSD.i, H1:  Euro vs US Dollar</span>
      </ChartCaption>
    </ChartFrame>
    <ChartTabs>
      <ChartTabRow>
        <ChartTab>EURUSD,H1</ChartTab>
        <ChartTab $active>EURUSD.i,H1</ChartTab>
        <Spacer />
        <ScrollArrow aria-label="Scroll tabs left" />
        <ScrollArrow aria-label="Scroll tabs right" $right />
      </ChartTabRow>
    </ChartTabs>
  </ChartColumn>
);

const ToolboxPanel = () => (
  <Toolbox>
    <ToolboxRail>
      <PanelClose aria-label="Close Toolbox"><CloseIcon size={8} weight={2.4} /></PanelClose>
      <ToolboxName>Toolbox</ToolboxName>
    </ToolboxRail>
    <ToolboxMain>
      <MailView>
        <MailTable>
          <colgroup>
            <col />
            <col width="376" />
            <col width="416" />
            <col width="151" />
          </colgroup>
          <thead>
            <tr>
              <MailHead>Subject</MailHead>
              <MailHead>From</MailHead>
              <MailHead>To</MailHead>
              <MailHead $right>Time</MailHead>
            </tr>
          </thead>
          <tbody>
            {MAILS.map((mail, i) => (
              <MailRow key={mail} $shaded={i % 2 === 1}>
                <MailCell><MailSubject><MailIcon />{mail}</MailSubject></MailCell>
                <MailCell>Trading Platform</MailCell>
                <MailCell />
                <MailCell $right>11:54 | Today</MailCell>
              </MailRow>
            ))}
          </tbody>
        </MailTable>
        <ScrollTrack />
      </MailView>
      <ToolboxFooter>
        {TOOL_TABS.map((name, i) => {
          const active = name === "Mailbox";
          return (
            <Tab key={name} $active={active} $divided={!active && name !== "News" && i < TOOL_TABS.length - 1}>
              {name}
              {active && <Count>8</Count>}
            </Tab>
          );
        })}
        <Spacer />
        <ServiceLink><BagIcon size={14} />Market</ServiceLink>
        <ServiceLink><SignalIcon size={16} />Signals</ServiceLink>
        <ServiceLink><CloudIcon size={16} />VPS</ServiceLink>
        <ServiceLink><GearIcon green />Tester</ServiceLink>
      </ToolboxFooter>
    </ToolboxMain>
  </Toolbox>
);

export default function App() {
  return (
    <>
      <GlobalStyle />
      <Shell>
        <TitleBar>
          <AppLogo />
          <span>10212 - AssetsfxGlobal-Server: Demo Account - Hedge - [EURUSD.i,H1]</span>
          <Spacer />
          <WindowControls>
            <button aria-label="Minimize"><MinimizeIcon /></button>
            <button aria-label="Restore"><RestoreIcon /></button>
            <button aria-label="Close"><CloseIcon /></button>
          </WindowControls>
        </TitleBar>
        <MenuBar>
          <MenuSymbol><CandlesIcon size={14} /></MenuSymbol>
          {MENUS.map((m) => (
            <MenuItem key={m}>{m}</MenuItem>
          ))}
          <Spacer />
          <WindowControls $small>
            <button aria-label="Minimize chart"><MinimizeIcon size={10} /></button>
            <button aria-label="Restore chart"><RestoreIcon size={10} /></button>
            <button aria-label="Close chart"><CloseIcon size={10} /></button>
          </WindowControls>
        </MenuBar>
        <MainToolbar />
        <Workspace>
          <LeftDock>
            <MarketWatch />
            <Navigator />
          </LeftDock>
          <ChartWindow />
        </Workspace>
        <ToolboxPanel />
        <StatusBar>
          <span>For Help, press F1</span>
          <Spacer />
          <StatusCell $width={129}>Default</StatusCell>
          <StatusCell $width={98} />
          <StatusCell $width={71} />
          <StatusCell $width={71} />
          <StatusCell $width={68} />
          <StatusCell $width={70} />
          <StatusCell $width={67} />
          <StatusCell $width={118}><ConnectionIcon />185.82 ms</StatusCell>
        </StatusBar>
      </Shell>
    </>
  );
}
